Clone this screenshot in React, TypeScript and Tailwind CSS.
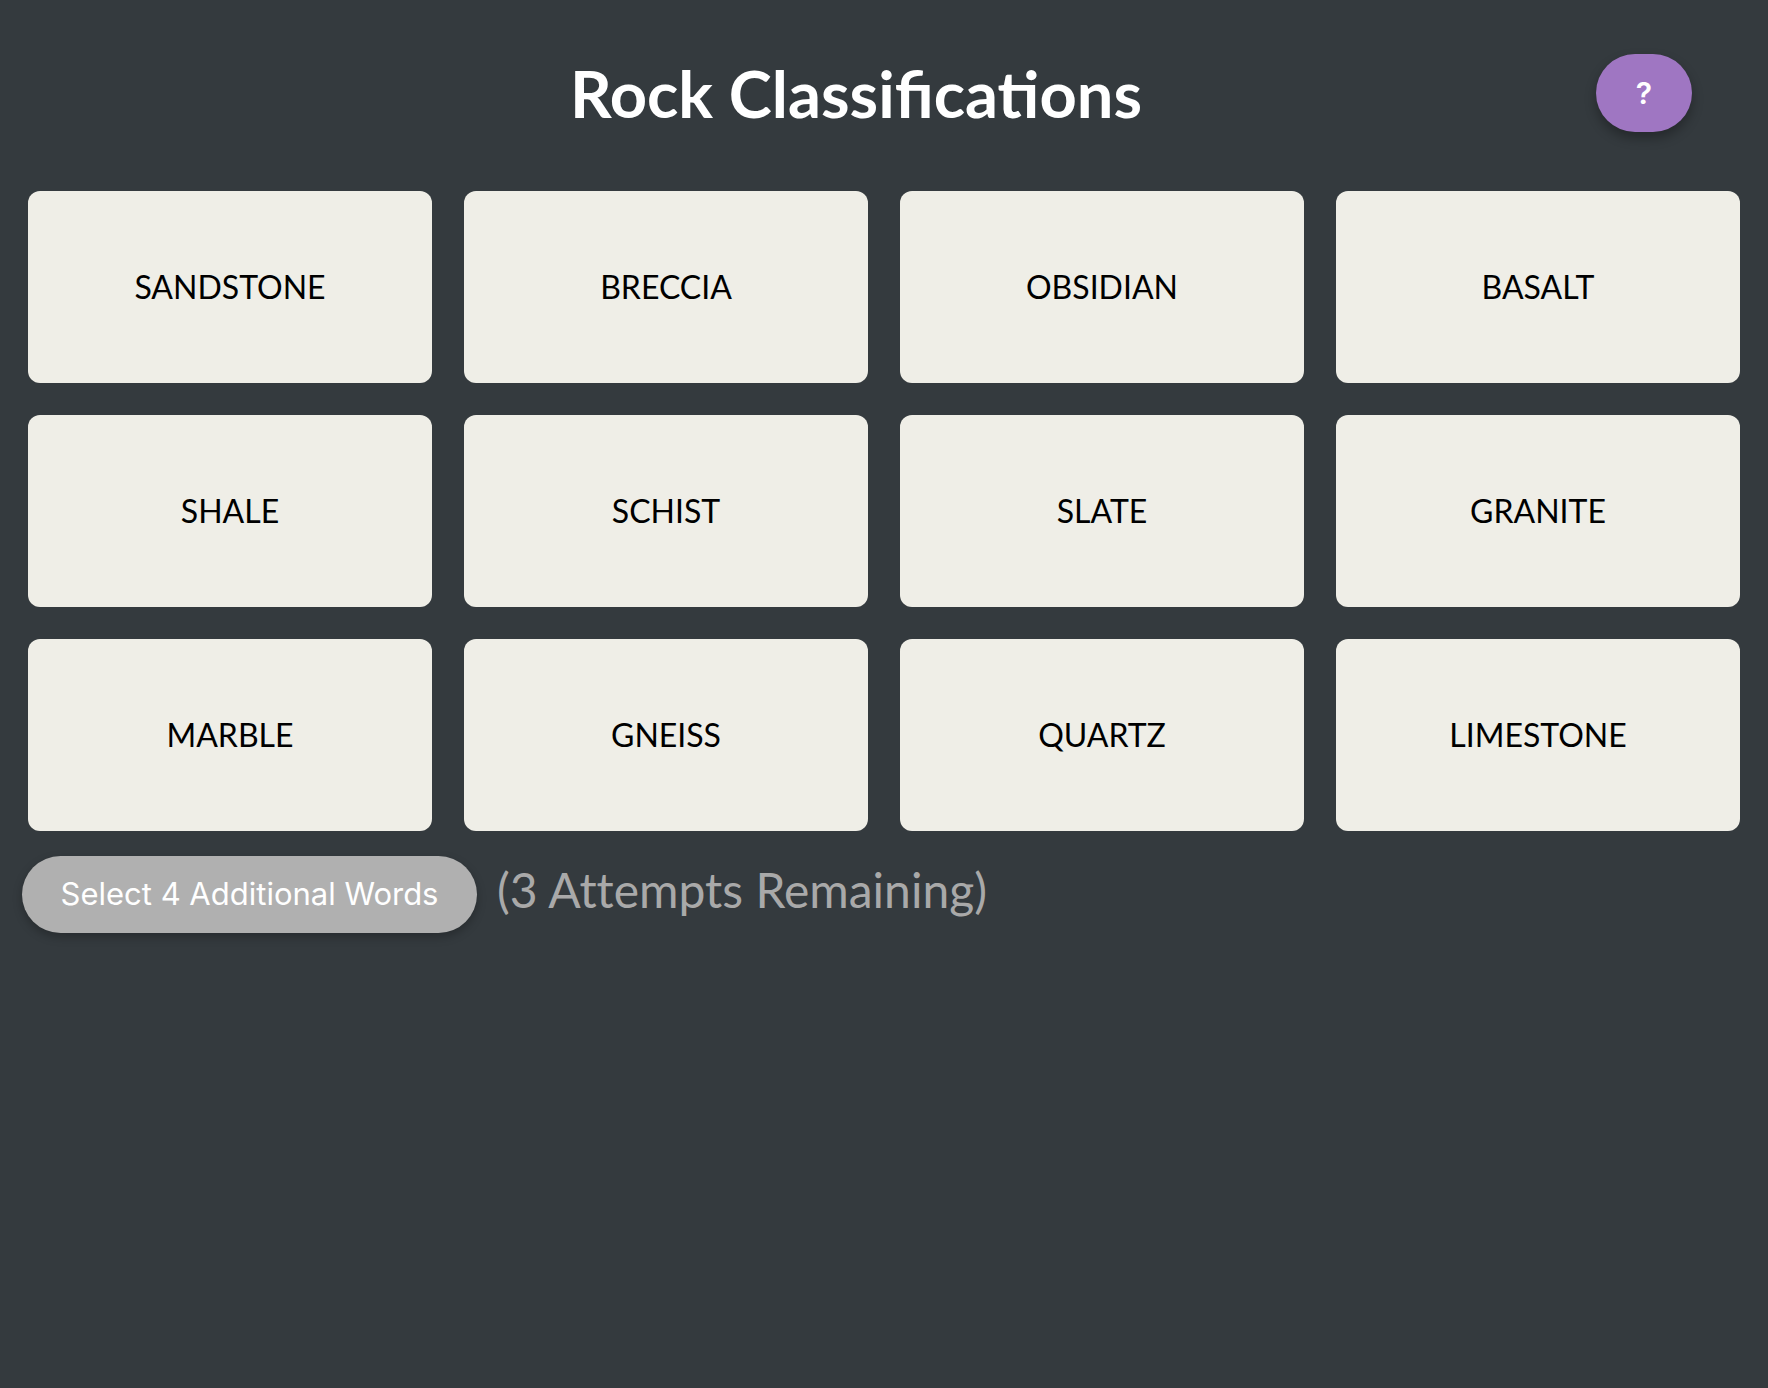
const WORDS = [
  'SANDSTONE', 'BRECCIA', 'OBSIDIAN', 'BASALT',
  'SHALE', 'SCHIST', 'SLATE', 'GRANITE',
  'MARBLE', 'GNEISS', 'QUARTZ', 'LIMESTONE',
];

function WordCard({ word }: { word: string }) {
  return (
    <button className="h-[192px] rounded-[12px] bg-[#efeee7] flex items-center justify-center text-[32px] text-black font-['Lato',sans-serif] cursor-pointer">
      {word}
    </button>
  );
}

export default function App() {
  return (
    <div className="min-h-[1388px] bg-[#343a3e] font-['Lato',sans-serif]">
      {/* Header */}
      <div className="flex items-center pt-[54px] px-[28px]">
        <h1 className="flex-1 pl-[88px] text-center text-[65px] font-bold text-white leading-[78px]">
          {'Rock Classifica\u200Ctions'}
        </h1>
        <button className="w-[96px] h-[78px] mr-[48px] rounded-full bg-[#9f76c2] text-white text-[30px] font-semibold font-['Inter',sans-serif] shadow-[0_6px_12px_rgba(0,0,0,0.3)] flex items-center justify-center">
          ?
        </button>
      </div>

      {/* Board */}
      <div className="grid grid-cols-4 gap-8 px-[28px] mt-[59px]">
        {WORDS.map((w) => (
          <WordCard key={w} word={w} />
        ))}
      </div>

      {/* Submit row */}
      <div className="flex items-center gap-[20px] pl-[22px] mt-[25px]">
        <button className="w-[455px] h-[77px] rounded-full bg-[#b0b0b0] text-white text-[31px] font-['Inter',sans-serif] shadow-[0_4px_10px_rgba(0,0,0,0.25)]">
          Select 4 Additional Words
        </button>
        <span className="text-[48px] text-[#a9a9a9] leading-none -mt-[10px] [font-variant-ligatures:none]">
          (3 Attempts Remaining)
        </span>
      </div>
    </div>
  );
}
